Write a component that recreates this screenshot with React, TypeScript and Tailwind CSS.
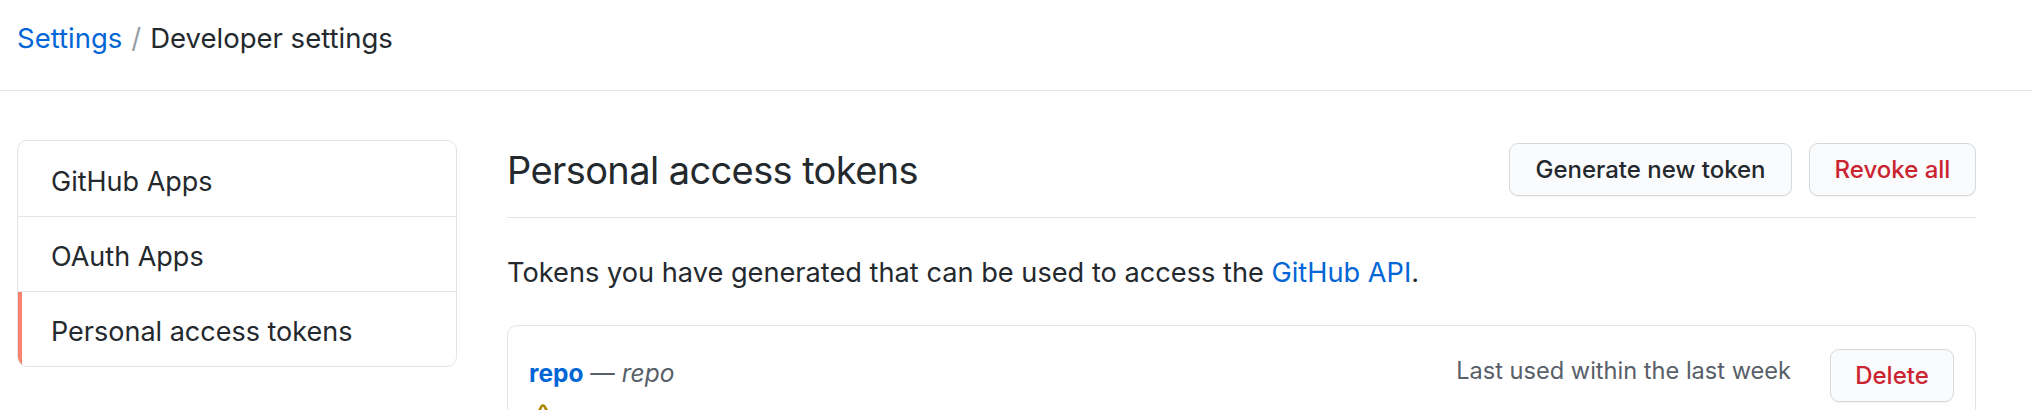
import React from 'react';

const sideItems = [
    { label: 'GitHub Apps', active: false },
    { label: 'OAuth Apps', active: false },
    { label: 'Personal access tokens', active: true },
];

function AlertIcon() {
    return (
        <svg width="28" height="28" viewBox="0 0 16 16" className="shrink-0 fill-[#b08800]">
            <path d="M8.22 1.754a.25.25 0 00-.44 0L1.698 13.132a.25.25 0 00.22.368h12.164a.25.25 0 00.22-.368L8.22 1.754zm-1.763-.707c.659-1.234 2.427-1.234 3.086 0l6.082 11.378A1.75 1.75 0 0114.082 15H1.918a1.75 1.75 0 01-1.543-2.575L6.457 1.047zM9 11a1 1 0 11-2 0 1 1 0 012 0zm-.25-5.25a.75.75 0 00-1.5 0v2.5a.75.75 0 001.5 0v-2.5z" />
        </svg>
    );
}

function Button({ children, danger, width }: { children: React.ReactNode; danger?: boolean; width: string }) {
    return (
        <button
            className={`${width} flex h-[53px] items-center justify-center rounded-[9px] border border-[#d6d8db] bg-[#fafbfc] text-[24px] font-medium shadow-[0_1px_0_rgba(27,31,35,0.05)] ${
                danger ? 'text-[#cb2431]' : 'text-[#24292e]'
            }`}
        >
            {children}
        </button>
    );
}

export default function App() {
    return (
        <div className="h-[410px] w-[2032px] overflow-hidden bg-white font-['Inter','Noto_Sans',sans-serif] text-[#24292e]">
            <header className="h-[91px] border-b border-[#e1e4e8] pl-[17px] pt-[20px]">
                <div className="flex text-[27.5px] leading-[36px]">
                    <span className="text-[#0366d6]">Settings</span>
                    <span className="mx-[9px] text-[#959da5]">/</span>
                    <span>Developer settings</span>
                </div>
            </header>

            <div className="flex gap-[50px] pl-[17px] pr-[56px] pt-[49px]">
                <nav className="w-[440px] shrink-0 self-start overflow-hidden rounded-[10px] border border-[#e1e4e8]">
                    {sideItems.map((item, i) => (
                        <div
                            key={item.label}
                            className={`flex h-[75px] items-center pl-[33px] pt-[6px] text-[27px] leading-[36px] ${
                                i > 0 ? 'border-t border-[#e1e4e8]' : ''
                            } ${item.active ? 'shadow-[inset_4px_0_0_#f9826c]' : ''}`}
                        >
                            {item.label}
                        </div>
                    ))}
                </nav>

                <main className="min-w-0 flex-1">
                    <div className="mt-[3px] flex items-center justify-between border-b border-[#e1e4e8] pb-[21px]">
                        <h2 className="text-[38px] leading-[48px] font-normal tracking-[-0.6px]">
                            Personal access tokens
                        </h2>
                        <div className="flex gap-[17px]">
                            <Button width="w-[283px]">Generate new token</Button>
                            <Button width="w-[167px]" danger>
                                Revoke all
                            </Button>
                        </div>
                    </div>

                    <p className="mt-[37px] text-[27.2px] leading-[36px]">
                        Tokens you have generated that can be used to access the{' '}
                        <span className="text-[#0366d6]">GitHub API</span>.
                    </p>

                    <div className="mt-[34px] rounded-[10px] border border-[#e1e4e8] px-[21px] pt-[23px]">
                        <div className="flex items-start justify-between">
                            <div className="mt-[8px] text-[24.5px] leading-[32px]">
                                <span className="font-bold text-[#0366d6]">repo</span>
                                <span className="text-[#586069]">
                                    {' '}
                                    — <em>repo</em>
                                </span>
                            </div>
                            <div className="flex items-center gap-[39px]">
                                <span className="mb-[9px] text-[23.6px] leading-[32px] text-[#586069]">
                                    Last used within the last week
                                </span>
                                <Button width="w-[124px]" danger>
                                    Delete
                                </Button>
                            </div>
                        </div>
                        <div className="mt-[2px] flex items-start gap-[8px] text-[24px] leading-[32px] text-[#b08800]">
                            <AlertIcon />
                            <span className="pt-[6px]">This token has no expiration date.</span>
                        </div>
                    </div>
                </main>
            </div>
        </div>
    );
}
